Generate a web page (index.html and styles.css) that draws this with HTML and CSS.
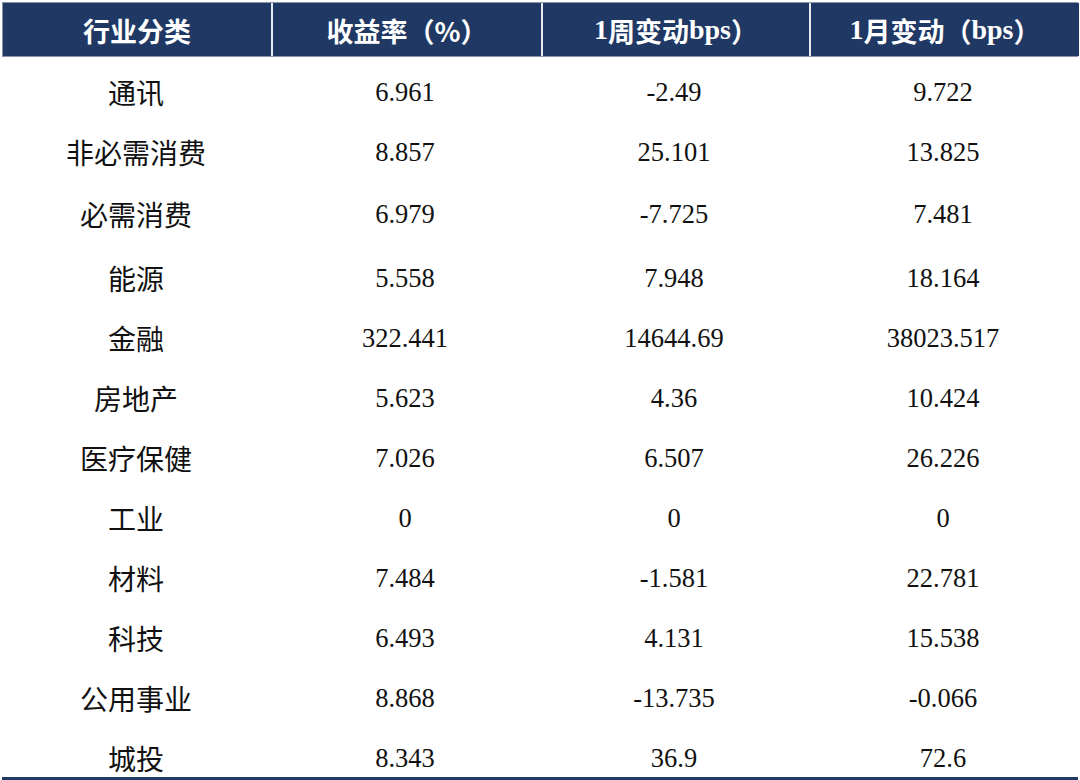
FILE: index.html
```html
<!DOCTYPE html>
<html>
<head>
<meta charset="utf-8">
<link rel="stylesheet" href="styles.css">
</head>
<body>
<div class="sheet">
  <div class="row head">
    <div class="cell">行业分类</div>
    <div class="cell">收益率（%）</div>
    <div class="cell"><span class="lat">1</span>周变动<span class="lat">bps</span>）</div>
    <div class="cell"><span class="lat">1</span>月变动（<span class="lat">bps</span>）</div>
  </div>
  <div class="body">
    <div class="row r1"><div class="cell name">通讯</div><div class="cell num">6.961</div><div class="cell num">-2.49</div><div class="cell num">9.722</div></div>
    <div class="row r2"><div class="cell name">非必需消费</div><div class="cell num">8.857</div><div class="cell num">25.101</div><div class="cell num">13.825</div></div>
    <div class="row r3"><div class="cell name">必需消费</div><div class="cell num">6.979</div><div class="cell num">-7.725</div><div class="cell num">7.481</div></div>
    <div class="row"><div class="cell name">能源</div><div class="cell num">5.558</div><div class="cell num">7.948</div><div class="cell num">18.164</div></div>
    <div class="row"><div class="cell name">金融</div><div class="cell num">322.441</div><div class="cell num">14644.69</div><div class="cell num">38023.517</div></div>
    <div class="row"><div class="cell name">房地产</div><div class="cell num">5.623</div><div class="cell num">4.36</div><div class="cell num">10.424</div></div>
    <div class="row"><div class="cell name">医疗保健</div><div class="cell num">7.026</div><div class="cell num">6.507</div><div class="cell num">26.226</div></div>
    <div class="row"><div class="cell name">工业</div><div class="cell num">0</div><div class="cell num">0</div><div class="cell num">0</div></div>
    <div class="row"><div class="cell name">材料</div><div class="cell num">7.484</div><div class="cell num">-1.581</div><div class="cell num">22.781</div></div>
    <div class="row"><div class="cell name">科技</div><div class="cell num">6.493</div><div class="cell num">4.131</div><div class="cell num">15.538</div></div>
    <div class="row"><div class="cell name">公用事业</div><div class="cell num">8.868</div><div class="cell num">-13.735</div><div class="cell num">-0.066</div></div>
    <div class="row"><div class="cell name">城投</div><div class="cell num">8.343</div><div class="cell num">36.9</div><div class="cell num">72.6</div></div>
  </div>
</div>
</body>
</html>
```

FILE: styles.css
```css
html, body {
  margin: 0;
  padding: 0;
  background: #ffffff;
}

.sheet {
  width: 1076px;
  margin: 2px 0 0 2px;
  color: #111111;
}

.row {
  display: grid;
  grid-template-columns: 268px 270px 268px 270px;
}

.head {
  height: 55px;
  box-sizing: border-box;
  border: 1px solid #8a93a8;
  background: #ffffff;
}

.head .cell {
  background: #203864;
  color: #ffffff;
  font-family: "Noto Sans CJK SC", sans-serif;
  font-weight: bold;
  font-size: 27px;
  display: flex;
  align-items: center;
  justify-content: center;
  padding-top: 1px;
}

.head .lat {
  font-family: "Liberation Serif", serif;
  font-weight: bold;
  font-size: 28px;
}

.head .cell + .cell {
  border-left: 2px solid #e8ebf2;
}

.body {
  border-bottom: 3px solid #203864;
}

.body .row {
  height: 60px;
}

.body .cell {
  display: flex;
  justify-content: center;
  align-items: flex-start;
  padding-top: 22px;
  box-sizing: border-box;
  line-height: 38px;
}

.body .r1 .cell { padding-top: 16px; }
.body .r2 .cell { padding-top: 16px; }
.body .r3 .cell { padding-top: 18px; }

.name {
  font-family: "Noto Sans CJK SC", sans-serif;
  font-size: 28px;
}

.num {
  font-family: "Liberation Serif", serif;
  font-size: 26.5px;
}
```
